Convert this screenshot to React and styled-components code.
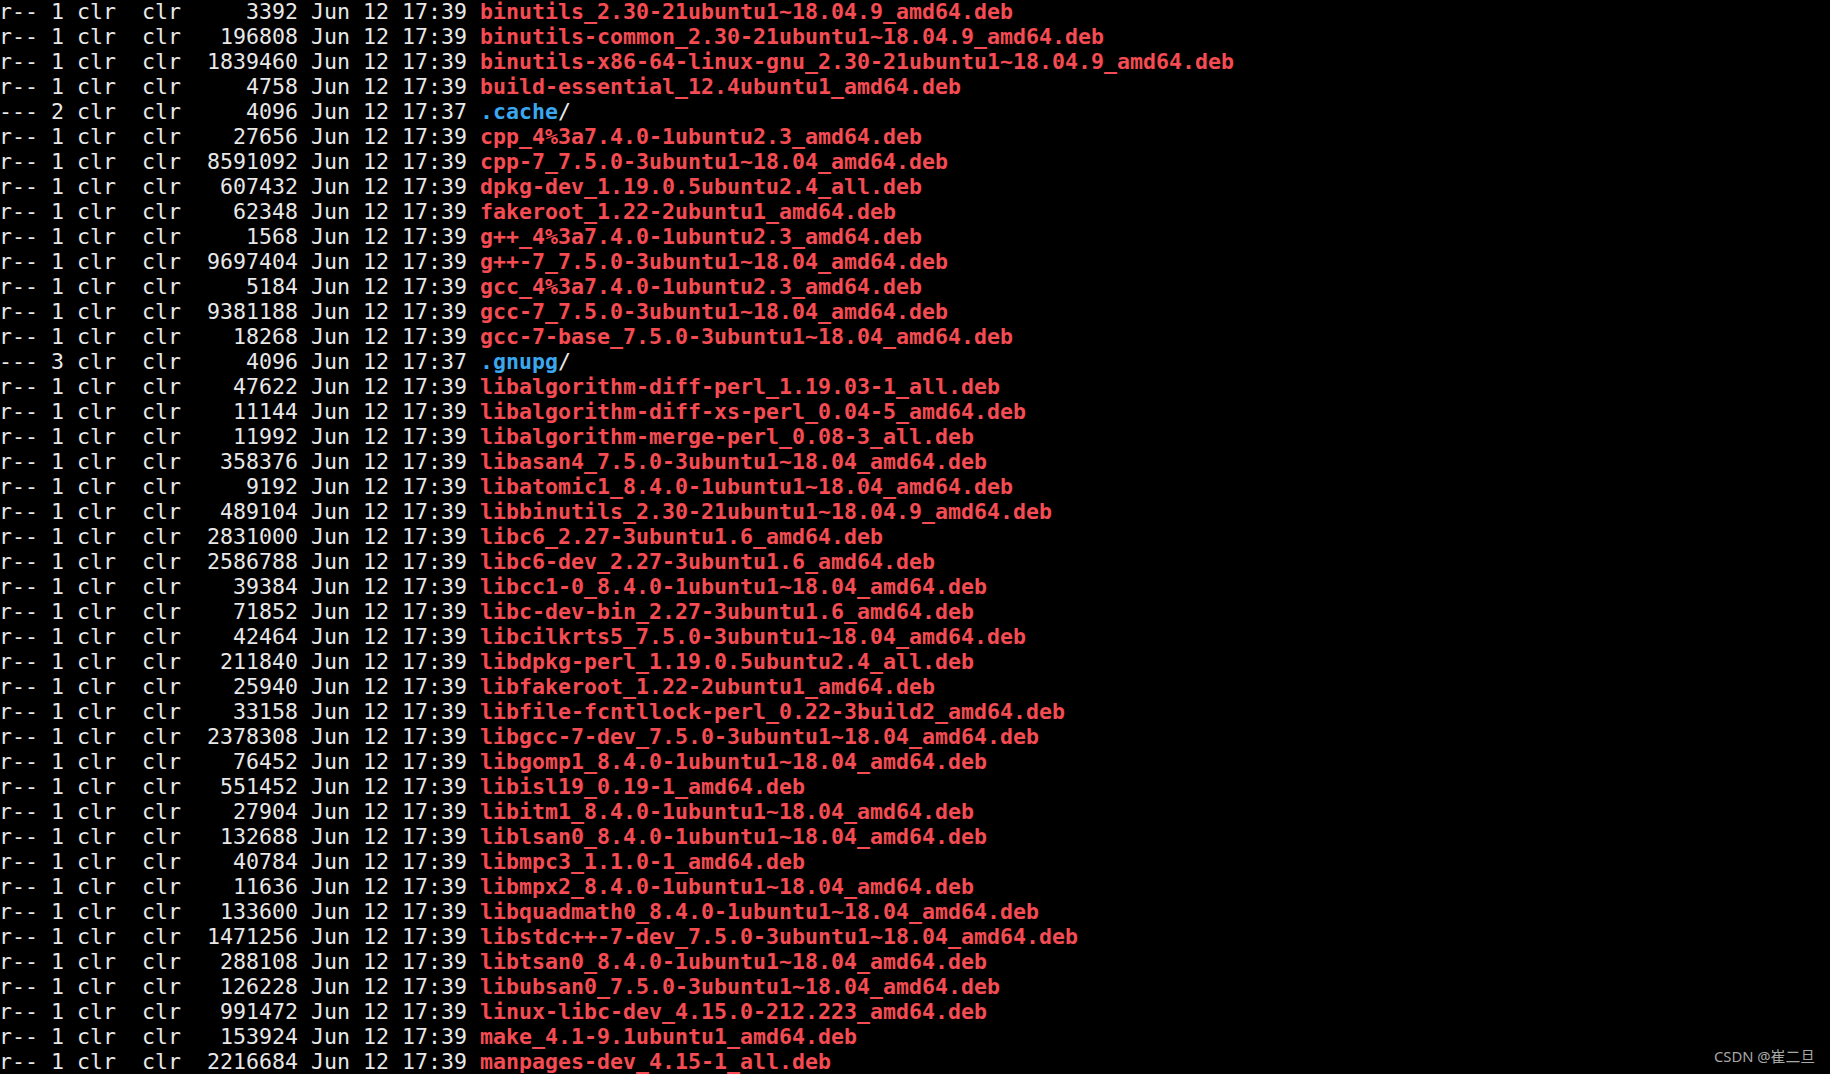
import React from "react";
import styled, { createGlobalStyle } from "styled-components";

const Global = createGlobalStyle`
  html, body { margin: 0; padding: 0; background: #000; }
  body { width: 1830px; height: 1074px; overflow: hidden; }
  #root { width: 1830px; height: 1074px; }
`;

const Screen = styled.div`
  position: relative;
  width: 1830px;
  height: 1074px;
  background: #000;
  overflow: hidden;
`;

const Listing = styled.div`
  display: flex;
  flex-direction: column;
  margin: -1px 0 0 -1px;
  font-family: "DejaVu Sans Mono", "Liberation Mono", monospace;
  font-size: 21.6px;
  line-height: 25px;
  color: #e8e8e8;
  white-space: pre;
`;

const Row = styled.div`
  display: flex;
  height: 25px;
`;

const Meta = styled.span`
  color: #e8e8e8;
`;

const Name = styled.span`
  font-weight: bold;
  color: ${(p) => (p.$dir ? "#3ba7ef" : "#f54b52")};
`;

const Slash = styled.span`
  color: #e8e8e8;
`;

const Watermark = styled.div`
  position: absolute;
  right: 15px;
  bottom: 8px;
  font-family: "Noto Sans", "Noto Sans CJK SC", sans-serif;
  font-size: 14.8px;
  color: #a8a8a8;
`;

const files = [
  ["r--", 1, "3392", "17:39", "binutils_2.30-21ubuntu1~18.04.9_amd64.deb"],
  ["r--", 1, "196808", "17:39", "binutils-common_2.30-21ubuntu1~18.04.9_amd64.deb"],
  ["r--", 1, "1839460", "17:39", "binutils-x86-64-linux-gnu_2.30-21ubuntu1~18.04.9_amd64.deb"],
  ["r--", 1, "4758", "17:39", "build-essential_12.4ubuntu1_amd64.deb"],
  ["---", 2, "4096", "17:37", ".cache", true],
  ["r--", 1, "27656", "17:39", "cpp_4%3a7.4.0-1ubuntu2.3_amd64.deb"],
  ["r--", 1, "8591092", "17:39", "cpp-7_7.5.0-3ubuntu1~18.04_amd64.deb"],
  ["r--", 1, "607432", "17:39", "dpkg-dev_1.19.0.5ubuntu2.4_all.deb"],
  ["r--", 1, "62348", "17:39", "fakeroot_1.22-2ubuntu1_amd64.deb"],
  ["r--", 1, "1568", "17:39", "g++_4%3a7.4.0-1ubuntu2.3_amd64.deb"],
  ["r--", 1, "9697404", "17:39", "g++-7_7.5.0-3ubuntu1~18.04_amd64.deb"],
  ["r--", 1, "5184", "17:39", "gcc_4%3a7.4.0-1ubuntu2.3_amd64.deb"],
  ["r--", 1, "9381188", "17:39", "gcc-7_7.5.0-3ubuntu1~18.04_amd64.deb"],
  ["r--", 1, "18268", "17:39", "gcc-7-base_7.5.0-3ubuntu1~18.04_amd64.deb"],
  ["---", 3, "4096", "17:37", ".gnupg", true],
  ["r--", 1, "47622", "17:39", "libalgorithm-diff-perl_1.19.03-1_all.deb"],
  ["r--", 1, "11144", "17:39", "libalgorithm-diff-xs-perl_0.04-5_amd64.deb"],
  ["r--", 1, "11992", "17:39", "libalgorithm-merge-perl_0.08-3_all.deb"],
  ["r--", 1, "358376", "17:39", "libasan4_7.5.0-3ubuntu1~18.04_amd64.deb"],
  ["r--", 1, "9192", "17:39", "libatomic1_8.4.0-1ubuntu1~18.04_amd64.deb"],
  ["r--", 1, "489104", "17:39", "libbinutils_2.30-21ubuntu1~18.04.9_amd64.deb"],
  ["r--", 1, "2831000", "17:39", "libc6_2.27-3ubuntu1.6_amd64.deb"],
  ["r--", 1, "2586788", "17:39", "libc6-dev_2.27-3ubuntu1.6_amd64.deb"],
  ["r--", 1, "39384", "17:39", "libcc1-0_8.4.0-1ubuntu1~18.04_amd64.deb"],
  ["r--", 1, "71852", "17:39", "libc-dev-bin_2.27-3ubuntu1.6_amd64.deb"],
  ["r--", 1, "42464", "17:39", "libcilkrts5_7.5.0-3ubuntu1~18.04_amd64.deb"],
  ["r--", 1, "211840", "17:39", "libdpkg-perl_1.19.0.5ubuntu2.4_all.deb"],
  ["r--", 1, "25940", "17:39", "libfakeroot_1.22-2ubuntu1_amd64.deb"],
  ["r--", 1, "33158", "17:39", "libfile-fcntllock-perl_0.22-3build2_amd64.deb"],
  ["r--", 1, "2378308", "17:39", "libgcc-7-dev_7.5.0-3ubuntu1~18.04_amd64.deb"],
  ["r--", 1, "76452", "17:39", "libgomp1_8.4.0-1ubuntu1~18.04_amd64.deb"],
  ["r--", 1, "551452", "17:39", "libisl19_0.19-1_amd64.deb"],
  ["r--", 1, "27904", "17:39", "libitm1_8.4.0-1ubuntu1~18.04_amd64.deb"],
  ["r--", 1, "132688", "17:39", "liblsan0_8.4.0-1ubuntu1~18.04_amd64.deb"],
  ["r--", 1, "40784", "17:39", "libmpc3_1.1.0-1_amd64.deb"],
  ["r--", 1, "11636", "17:39", "libmpx2_8.4.0-1ubuntu1~18.04_amd64.deb"],
  ["r--", 1, "133600", "17:39", "libquadmath0_8.4.0-1ubuntu1~18.04_amd64.deb"],
  ["r--", 1, "1471256", "17:39", "libstdc++-7-dev_7.5.0-3ubuntu1~18.04_amd64.deb"],
  ["r--", 1, "288108", "17:39", "libtsan0_8.4.0-1ubuntu1~18.04_amd64.deb"],
  ["r--", 1, "126228", "17:39", "libubsan0_7.5.0-3ubuntu1~18.04_amd64.deb"],
  ["r--", 1, "991472", "17:39", "linux-libc-dev_4.15.0-212.223_amd64.deb"],
  ["r--", 1, "153924", "17:39", "make_4.1-9.1ubuntu1_amd64.deb"],
  ["r--", 1, "2216684", "17:39", "manpages-dev_4.15-1_all.deb"],
];

export default function App() {
  return (
    <Screen>
      <Global />
      <Listing>
        {files.map(([perm, links, size, time, name, dir]) => (
          <Row key={name}>
            <Meta>{`${perm} ${links} clr  clr  ${size.padStart(7, " ")} Jun 12 ${time} `}</Meta>
            <Name $dir={dir}>{name}</Name>
            {dir && <Slash>/</Slash>}
          </Row>
        ))}
      </Listing>
      <Watermark>CSDN @崔二旦</Watermark>
    </Screen>
  );
}
